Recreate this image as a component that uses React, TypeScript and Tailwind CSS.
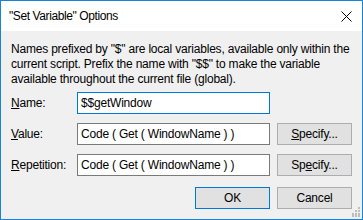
import React from 'react';

const font = { fontFamily: '"Liberation Sans", Arial, sans-serif' };

const Field: React.FC<{ value: string; focused?: boolean }> = ({ value, focused }) => (
  <div
    className={`w-[193px] h-[22px] bg-white flex items-center pl-[3px] text-[12px] text-black border ${
      focused ? 'border-[#0078d7]' : 'border-[#7a7a7a]'
    }`}
  >
    {value}
  </div>
);

const Button: React.FC<{ children: React.ReactNode; primary?: boolean }> = ({ children, primary }) => (
  <div
    className={`w-[75px] h-[22px] flex items-center justify-center text-[12px] text-black bg-[#e1e1e1] border ${
      primary ? 'border-[#0078d7]' : 'border-[#adadad]'
    }`}
  >
    {children}
  </div>
);

export default function App() {
  return (
    <div
      className="w-[363px] h-[220px] border border-[#1883d7] bg-[#f0f0f0] flex flex-col overflow-hidden relative tracking-[-0.2px]"
      style={font}
    >
      {/* title bar */}
      <div className="h-[30px] bg-white flex items-center justify-between pl-[8px] pr-[10px] shrink-0">
        <span className="text-[12px] text-black tracking-[-0.4px]">"Set Variable" Options</span>
        <svg width="11" height="11" viewBox="0 0 11 11">
          <path d="M0.5 0.5 L10.5 10.5 M10.5 0.5 L0.5 10.5" stroke="#000" strokeWidth="1" />
        </svg>
      </div>

      <div className="flex flex-col px-[10px] pt-[11px] text-[12px] text-black">
        <p className="leading-[15px] whitespace-nowrap">
          Names prefixed by "$" are local variables, available only within the
          <br />
          current script. Prefix the name with "$$" to make the variable
          <br />
          available throughout the current file (global).
        </p>

        <div className="flex flex-col gap-[9px] mt-[5px]">
          <div className="flex items-center">
            <span className="w-[66px]"><u>N</u>ame:</span>
            <Field value="$$getWindow" focused />
          </div>
          <div className="flex items-center">
            <span className="w-[66px]"><u>V</u>alue:</span>
            <Field value="Code ( Get ( WindowName ) )" />
            <div className="ml-[7px]">
              <Button><u>S</u>pecify...</Button>
            </div>
          </div>
          <div className="flex items-center">
            <span className="w-[66px]"><u>R</u>epetition:</span>
            <Field value="Code ( Get ( WindowName ) )" />
            <div className="ml-[7px]">
              <Button>Sp<u>e</u>cify...</Button>
            </div>
          </div>
        </div>

        <div className="flex justify-end gap-[7px] mt-[11px]">
          <Button primary>OK</Button>
          <Button>Cancel</Button>
        </div>
      </div>

      {/* resize grip */}
      <svg className="absolute right-[2px] bottom-[2px]" width="10" height="10" viewBox="0 0 10 10">
        {[
          [8, 0], [8, 3], [5, 3], [8, 6], [5, 6], [2, 6], [8, 8], [5, 8], [2, 8],
        ].map(([x, y], i) => (
          <rect key={i} x={x} y={y} width="2" height="2" fill="#bdbdbd" />
        ))}
      </svg>
    </div>
  );
}
